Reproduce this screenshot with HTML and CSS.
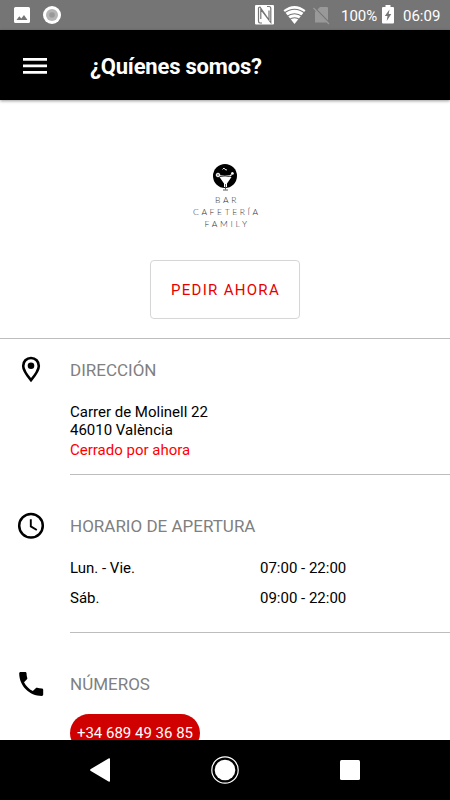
FILE: index.html
```html
<!DOCTYPE html>
<html lang="es">
<head>
    <meta charset="UTF-8">
    <meta name="viewport" content="width=device-width, initial-scale=1.0">
    <title>¿Quíenes somos?</title>
    <link rel="stylesheet" href="styles.css">
</head>
<body>
    <div class="statusbar">
        <svg class="status-left" width="50" height="22" viewBox="0 0 50 22">
            <path fill="#fff" fill-rule="evenodd" d="M1.500 3h13a1.500 1.500 0 0 1 1.500 1.500v13a1.500 1.500 0 0 1-1.500 1.500h-13a1.500 1.500 0 0 1-1.500-1.500v-13a1.500 1.500 0 0 1 1.500-1.500zM2.500 16h11l-3.500-5-2.700 3.500-2-2.200z"/>
            <circle cx="38" cy="11" r="9" fill="#fff"/>
            <circle cx="38" cy="11" r="6" fill="#b5b5b5"/>
            <circle cx="38" cy="11" r="2.800" fill="#999"/>
        </svg>
        <svg class="status-right" width="80" height="22" viewBox="0 0 80 22">
            <rect x="0" y="1" width="19" height="19.500" rx="1" fill="#fff"/>
            <path d="M7 19H5Q3.500 19 3.500 17V4Q3.500 3 5 3L14 16V6.500M12 2.500h2Q15.800 2.500 15.800 4.500v14L5.800 5.500V15" fill="none" stroke="#757575" stroke-width="1.200"/>
            <path d="M28.500 6.300Q39.500-2.500 50.500 6.300L39.500 20z" fill="#fff"/>
            <path d="M29 9.300q10.500-8 21 0M31.500 12.600q8-5.800 16 0M34 15.700q5.500-3.800 11 0" fill="none" stroke="#757575" stroke-width="1.100"/>
            <path d="M65 3h7q1 0 1 1v14.500H60V8z" fill="#999"/>
            <path d="M59.500 3.500L75 19.500" stroke="#757575" stroke-width="1.300"/>
            <path d="M58.500 4L74 20" stroke="#999" stroke-width="1.300"/>
        </svg>
        <span class="battery-level">100%</span>
        <svg class="battery" width="12" height="20" viewBox="0 0 12 20">
            <path d="M3.500 0h5v2H11q1 0 1 1v14.500q0 1-1 1H1q-1 0-1-1V3q0-1 1-1h2.500z" fill="#fff"/>
            <path d="M7.500 4.500L2.800 11H5.500L4.700 16L9.300 9H6.700z" fill="#757575"/>
        </svg>
        <span class="clock">06:09</span>
    </div>

    <header class="appbar">
        <svg class="menu-icon" width="24" height="16" viewBox="0 0 24 16">
            <path d="M0 0h24v2.700H0zM0 6.500h24v2.700H0zM0 13h24v2.700H0z" fill="#fff"/>
        </svg>
        <h1>¿Quíenes somos?</h1>
    </header>

    <main>
        <section class="hero">
            <svg class="logo" width="70" height="66" viewBox="0 0 70 66">
                <circle cx="35" cy="13" r="12" fill="#000"/>
                <path d="M29.500 14h12L37 20.500V24h-3v-3.500z" fill="#fff"/>
                <path d="M28 12.500q7 1.500 13.500 0M40 13.500l2.500-4.500M32.500 6.500l1.500-1.500 1 1.500 2 .5" fill="none" stroke="#fff" stroke-width=".9"/>
                <circle cx="28" cy="12" r="1.800" fill="#999" stroke="#fff"/>
                <circle cx="42.500" cy="10.500" r="1.300" fill="#fff"/>
                <path d="M35.500 21v5.500M33 27h5" fill="none" stroke="#444" stroke-width=".9"/>
                <text x="25" y="40.200" textLength="21.500">BAR</text>
                <text x="3" y="52.200" textLength="65">CAFETERÍA</text>
                <text x="14.500" y="64.200" textLength="42.500">FAMILY</text>
            </svg>
            <button class="order">PEDIR AHORA</button>
        </section>

        <section class="info address">
            <div class="info-title">
                <svg width="62" height="30" viewBox="0 0 62 30">
                    <path d="M31 3c-4.500 0-7.800 3.400-7.800 7.900 0 4.800 4.400 10.100 7.800 14.200 3.400-4.100 7.800-9.400 7.800-14.200 0-4.500-3.300-7.900-7.800-7.900z" fill="none" stroke="#000" stroke-width="2.600"/>
                    <circle cx="31" cy="10.800" r="3.300"/>
                </svg>
                <h2>DIRECCIÓN</h2>
            </div>
            <div class="info-body">
                <p>Carrer de Molinell 22<br>46010 València</p>
                <p class="closed">Cerrado por ahora</p>
            </div>
        </section>

        <section class="info hours">
            <div class="info-title">
                <svg width="62" height="30" viewBox="0 0 62 30">
                    <circle cx="31" cy="14.700" r="11.800" fill="none" stroke="#000" stroke-width="2.500"/>
                    <path d="M30.800 8.200v7.200l6 3.600" fill="none" stroke="#000" stroke-width="1.900"/>
                </svg>
                <h2>HORARIO DE APERTURA</h2>
            </div>
            <div class="info-body">
                <div class="day"><span>Lun. - Vie.</span><span>07:00 - 22:00</span></div>
                <div class="day"><span>Sáb.</span><span>09:00 - 22:00</span></div>
            </div>
        </section>

        <section class="info phones">
            <div class="info-title">
                <svg width="62" height="30" viewBox="0 0 62 30">
                    <path transform="translate(15.200 -1.100) scale(1.333)" d="M6.620 10.790c1.440 2.830 3.760 5.140 6.590 6.590l2.200-2.200c.27-.27.67-.36 1.020-.24 1.120.37 2.330.57 3.570.57.55 0 1 .45 1 1V20c0 .55-.45 1-1 1-9.390 0-17-7.610-17-17 0-.55.45-1 1-1h3.500c.55 0 1 .45 1 1 0 1.250.2 2.450.57 3.570.11.35.03.74-.25 1.020l-2.200 2.200z"/>
                </svg>
                <h2>NÚMEROS</h2>
            </div>
            <div class="info-body">
                <a class="phone">+34 689 49 36 85</a>
            </div>
        </section>
    </main>

    <nav class="navbar">
        <svg width="20" height="26" viewBox="0 0 20 26">
            <path d="M.8 12L18.500 1.500q1.500-.5 1.500 .5v22q0 1-1.500 .5L.8 14q-1.500-1 0-2z" fill="#fff"/>
        </svg>
        <svg width="28" height="28" viewBox="0 0 28 28">
            <circle cx="14" cy="14" r="13.200" fill="none" stroke="#fff" stroke-width="1.200"/>
            <circle cx="14" cy="14" r="10.300" fill="#fff"/>
        </svg>
        <svg width="20" height="20" viewBox="0 0 20 20">
            <rect width="20" height="20" rx="1.500" fill="#fff"/>
        </svg>
    </nav>
</body>
</html>
```
FILE: styles.css
```css
* {
    box-sizing: border-box;
}
body {
    font-family: Roboto, sans-serif;
    font-size: 15px;
    display: flex;
    flex-direction: column;
    height: 800px;
    margin: 0;
    overflow: hidden;
    color: #000;
    background-color: #fff;
}
h1, h2, p {
    margin: 0;
}
svg {
    display: block;
    flex: none;
}
.statusbar {
    display: flex;
    align-items: center;
    flex: none;
    height: 30px;
    padding: 0 9px 0 14px;
    background-color: #757575;
    color: #fff;
    line-height: 30px;
}
.status-left {
    margin-left: 0;
}
.status-right {
    margin-left: auto;
    margin-right: 6px;
}
.battery-level {
    width: 36px;
    padding-top: 1px;
    white-space: nowrap;
}
.battery {
    margin: 0 9px 0 5px;
}
.clock {
    width: 38px;
    padding-top: 1px;
    white-space: nowrap;
}
.appbar {
    display: flex;
    align-items: center;
    flex: none;
    height: 70px;
    padding-left: 23px;
    background-color: #000;
    color: #fff;
    box-shadow: 0 1px 3px rgba(0, 0, 0, 0.4);
    z-index: 1;
}
.menu-icon {
    margin-top: 2px;
}
.appbar h1 {
    margin-left: 43px;
    padding-top: 2px;
    font-size: 22px;
    font-weight: bold;
    letter-spacing: -0.2px;
}
main {
    flex: 1;
    min-height: 0;
    overflow: hidden;
}
.hero {
    display: flex;
    flex-direction: column;
    align-items: center;
    height: 239px;
    padding-top: 63px;
    border-bottom: 1px solid #bdbdbd;
}
.logo text {
    font-family: Lato, sans-serif;
    font-size: 8.5px;
    font-weight: 300;
    fill: #333;
}
.order {
    width: 150px;
    height: 59px;
    margin-top: 31px;
    padding: 0 0 0 1px;
    border: 1px solid #d6d6d6;
    border-radius: 4px;
    background-color: #fff;
    color: #e60000;
    font-family: inherit;
    font-size: 15px;
    letter-spacing: 1.3px;
}
.info-title {
    display: flex;
    align-items: center;
    height: 30px;
}
.info-title h2 {
    margin-left: 8px;
    padding-bottom: 1px;
    font-size: 17px;
    font-weight: normal;
    color: #808080;
}
.info-body {
    margin-left: 70px;
    border-bottom: 1px solid #bdbdbd;
}
.address {
    padding-top: 16px;
}
.address .info-body {
    height: 90px;
    padding-top: 19px;
    line-height: 17.5px;
}
.closed {
    margin-top: 3px;
    color: #f00;
}
.hours, .phones {
    padding-top: 36px;
}
.hours .info-body {
    height: 92px;
    padding-top: 12px;
}
.day {
    display: grid;
    grid-template-columns: 190px 1fr;
    line-height: 30px;
}
.phones .info-body {
    padding-top: 15px;
    border: none;
}
.phone {
    display: block;
    width: 130px;
    height: 38px;
    border-radius: 19px;
    background-color: #d00000;
    color: #fff;
    line-height: 38px;
    text-align: center;
}
.navbar {
    display: flex;
    align-items: center;
    justify-content: space-between;
    flex: none;
    height: 60px;
    padding: 0 90px;
    background-color: #000;
}
```
